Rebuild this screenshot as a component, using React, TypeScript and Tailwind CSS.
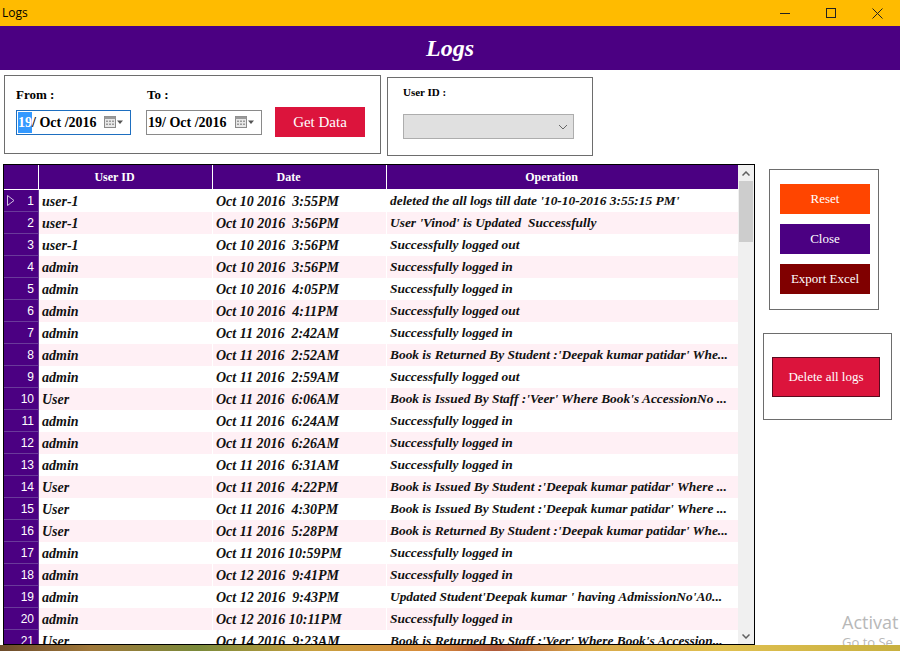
import React from "react";

const rows: [string, string, string][] = [
  ["user-1", "Oct 10 2016  3:55PM", "deleted the all logs till date '10-10-2016 3:55:15 PM'"],
  ["user-1", "Oct 10 2016  3:56PM", "User 'Vinod' is Updated  Successfully"],
  ["user-1", "Oct 10 2016  3:56PM", "Successfully logged out"],
  ["admin", "Oct 10 2016  3:56PM", "Successfully logged in"],
  ["admin", "Oct 10 2016  4:05PM", "Successfully logged in"],
  ["admin", "Oct 10 2016  4:11PM", "Successfully logged out"],
  ["admin", "Oct 11 2016  2:42AM", "Successfully logged in"],
  ["admin", "Oct 11 2016  2:52AM", "Book is Returned By Student :'Deepak kumar patidar' Whe..."],
  ["admin", "Oct 11 2016  2:59AM", "Successfully logged out"],
  ["User", "Oct 11 2016  6:06AM", "Book is Issued By Staff :'Veer' Where Book's AccessionNo ..."],
  ["admin", "Oct 11 2016  6:24AM", "Successfully logged in"],
  ["admin", "Oct 11 2016  6:26AM", "Successfully logged in"],
  ["admin", "Oct 11 2016  6:31AM", "Successfully logged in"],
  ["User", "Oct 11 2016  4:22PM", "Book is Issued By Student :'Deepak kumar patidar' Where ..."],
  ["User", "Oct 11 2016  4:30PM", "Book is Issued By Student :'Deepak kumar patidar' Where ..."],
  ["User", "Oct 11 2016  5:28PM", "Book is Returned By Student :'Deepak kumar patidar' Whe..."],
  ["admin", "Oct 11 2016 10:59PM", "Successfully logged in"],
  ["admin", "Oct 12 2016  9:41PM", "Successfully logged in"],
  ["admin", "Oct 12 2016  9:43PM", "Updated Student'Deepak kumar ' having AdmissionNo'A0..."],
  ["admin", "Oct 12 2016 10:11PM", "Successfully logged in"],
  ["User", "Oct 14 2016  9:23AM", "Book is Returned By Staff :'Veer' Where Book's Accession..."],
];

function CalIcon() {
  return (
    <svg width="20" height="12" viewBox="0 0 20 12">
      <rect x="0.5" y="0.5" width="11" height="11" fill="#e8e8e8" stroke="#8a8a8a" />
      <rect x="0.5" y="0.5" width="11" height="2.5" fill="#9a9a9a" />
      <g fill="#9a9a9a">
        <rect x="2" y="4.5" width="2" height="1.5" />
        <rect x="5" y="4.5" width="2" height="1.5" />
        <rect x="8" y="4.5" width="2" height="1.5" />
        <rect x="2" y="7.5" width="2" height="1.5" />
        <rect x="5" y="7.5" width="2" height="1.5" />
        <rect x="8" y="7.5" width="2" height="1.5" />
      </g>
      <path d="M13 4.5 L19 4.5 L16 8 Z" fill="#555" />
    </svg>
  );
}

export default function App() {
  const serif = { fontFamily: "'Liberation Serif', serif" };
  return (
    <div className="w-[900px] h-[651px] overflow-hidden bg-white flex flex-col" style={serif}>
      {/* title bar */}
      <div className="h-[26px] bg-[#ffbb00] flex items-center shrink-0">
        <span className="pl-[2px] text-[12px] text-black" style={{ fontFamily: "'Open Sans', sans-serif" }}>Logs</span>
        <div className="ml-auto flex items-center h-full">
          <div className="w-[46px] h-full flex items-center justify-center">
            <div className="w-[10px] h-px bg-[#222]" />
          </div>
          <div className="w-[46px] h-full flex items-center justify-center">
            <div className="w-[10px] h-[10px] border border-[#222]" />
          </div>
          <div className="w-[46px] h-full flex items-center justify-center">
            <svg width="11" height="11" viewBox="0 0 11 11">
              <path d="M0.5 0.5 L10.5 10.5 M10.5 0.5 L0.5 10.5" stroke="#222" strokeWidth="1" />
            </svg>
          </div>
        </div>
      </div>
      {/* header */}
      <div className="h-[44px] bg-[#4b0082] flex items-center justify-center shrink-0">
        <span className="text-white italic text-[24px] font-semibold" style={serif}>Logs</span>
      </div>

      {/* top filters */}
      <div className="flex items-start pl-[4px] pt-[5px] shrink-0">
        <div className="w-[377px] h-[79px] border border-[#6d6d6d] flex flex-col pl-[11px] pt-[12px]">
          <div className="flex text-[13px] font-bold text-black leading-none">
            <span className="w-[131px]">From :</span>
            <span>To :</span>
          </div>
          <div className="flex items-center mt-[6px]">
            <div className="w-[115px] h-[25px] border border-[#1e6fc0] flex items-center pl-[1px] pr-[6px] text-[14px] font-bold text-black">
              <span className="bg-[#3399ff] text-white">19</span>
              <span className="whitespace-pre">/ Oct /2016</span>
              <span className="ml-auto"><CalIcon /></span>
            </div>
            <div className="w-[116px] h-[25px] border border-[#8a8a8a] flex items-center pl-[1px] pr-[6px] ml-[15px] text-[14px] font-bold text-black">
              <span className="whitespace-pre">19/ Oct /2016</span>
              <span className="ml-auto"><CalIcon /></span>
            </div>
            <button className="w-[90px] h-[30px] bg-[#dc143c] text-white text-[15px] ml-[13px] flex items-center justify-center" style={serif}>
              Get Data
            </button>
          </div>
        </div>
        <div className="w-[206px] h-[79px] border border-[#6d6d6d] ml-[6px] mt-[2px] flex flex-col pl-[15px] pt-[9px]">
          <span className="text-[11px] font-bold text-black leading-none">User ID :</span>
          <div className="w-[171px] h-[25px] mt-[16px] bg-[#e0e0e0] border border-[#adadad] flex items-center justify-end pr-[5px]">
            <svg width="10" height="6" viewBox="0 0 10 6">
              <path d="M1 1 L5 5 L9 1" stroke="#666" strokeWidth="1" fill="none" />
            </svg>
          </div>
        </div>
      </div>

      {/* main */}
      <div className="flex items-start pl-[3px] mt-[8px] flex-1 min-h-0">
        <div className="w-[752px] h-[481px] border border-black flex overflow-hidden shrink-0">
          <div className="flex-1 flex flex-col min-w-0">
            {/* header row */}
            <div className="h-[25px] flex bg-[#4b0082] shrink-0 border-b border-white">
              <div className="w-[35px] border-r border-white" />
              <div className="w-[174px] border-r border-white flex items-center justify-center pr-[22px] text-white text-[12px] font-semibold">User ID</div>
              <div className="w-[174px] border-r border-white flex items-center justify-center pr-[22px] text-white text-[12px] font-semibold">Date</div>
              <div className="flex-1 flex items-center justify-center pr-[22px] text-white text-[12px] font-semibold">Operation</div>
            </div>
            {rows.map((r, i) => (
              <div key={i} className={`h-[22px] flex shrink-0 ${i % 2 === 1 ? "bg-[#fff0f5]" : "bg-white"}`}>
                <div className="w-[35px] bg-[#4b0082] border-r border-b border-[#6a3a9a] flex items-center justify-end pr-[4px] text-white text-[12px] relative" style={{ fontFamily: "'Liberation Sans', sans-serif" }}>
                  {i === 0 && (
                    <svg className="absolute left-[3px] top-[5px]" width="8" height="11" viewBox="0 0 8 11">
                      <path d="M0.5 0.5 L7 5.5 L0.5 10.5 Z" fill="none" stroke="#cfc0e0" strokeWidth="1" />
                    </svg>
                  )}
                  {i + 1}
                </div>
                <div className="w-[174px] border-r border-white flex items-center pl-[3px] text-[14px] font-bold italic text-[#111] whitespace-pre overflow-hidden">{r[0]}</div>
                <div className="w-[174px] border-r border-white flex items-center pl-[3px] text-[14px] font-bold italic text-[#111] whitespace-pre overflow-hidden">{r[1]}</div>
                <div className="flex-1 min-w-0 flex items-center pl-[3px] text-[13.4px] font-bold italic text-[#111] whitespace-pre overflow-hidden">{r[2]}</div>
              </div>
            ))}
          </div>
          {/* scrollbar */}
          <div className="w-[16px] bg-[#f0f0f0] flex flex-col shrink-0">
            <div className="h-[16px] flex items-center justify-center">
              <svg width="8" height="5" viewBox="0 0 8 5"><path d="M0.5 4.5 L4 1 L7.5 4.5" stroke="#606060" strokeWidth="1.5" fill="none" /></svg>
            </div>
            <div className="h-[61px] bg-[#cdcdcd] mx-[1px]" />
            <div className="flex-1" />
            <div className="h-[16px] flex items-center justify-center">
              <svg width="8" height="5" viewBox="0 0 8 5"><path d="M0.5 0.5 L4 4 L7.5 0.5" stroke="#606060" strokeWidth="1.5" fill="none" /></svg>
            </div>
          </div>
        </div>

        <div className="flex flex-col items-start">
          <div className="w-[110px] h-[141px] border border-[#6d6d6d] ml-[14px] mt-[5px] flex flex-col pl-[10px] pt-[14px] gap-[10px]">
            <button className="w-[90px] h-[30px] bg-[#ff4500] text-white text-[13px]" style={serif}>Reset</button>
            <button className="w-[90px] h-[30px] bg-[#4b0082] text-white text-[13px]" style={serif}>Close</button>
            <button className="w-[90px] h-[30px] bg-[#800000] text-white text-[13px]" style={serif}>Export Excel</button>
          </div>
          <div className="w-[129px] h-[87px] border border-[#6d6d6d] ml-[8px] mt-[23px] flex flex-col pl-[8px] pt-[23px]">
            <button className="w-[108px] h-[40px] bg-[#dc143c] border border-[#5a0a1e] text-white text-[13px]" style={serif}>Delete all logs</button>
          </div>
          <div className="ml-[87px] mt-[192px] flex flex-col leading-[20px] text-[#b8b8b8]" style={{ fontFamily: "'Open Sans', sans-serif" }}>
            <span className="text-[18px] whitespace-nowrap">Activat</span>
            <span className="text-[13px] whitespace-nowrap">Go to Se</span>
          </div>
        </div>
      </div>
      {/* desktop strip */}
      <div className="h-[6px] shrink-0 bg-[linear-gradient(90deg,#6b4a2a_0%,#a0783a_10%,#7a8a3a_22%,#c8a040_35%,#d88a3a_48%,#b05a3a_55%,#d8a84a_65%,#e0c050_80%,#c8b040_100%)]" />
    </div>
  );
}
